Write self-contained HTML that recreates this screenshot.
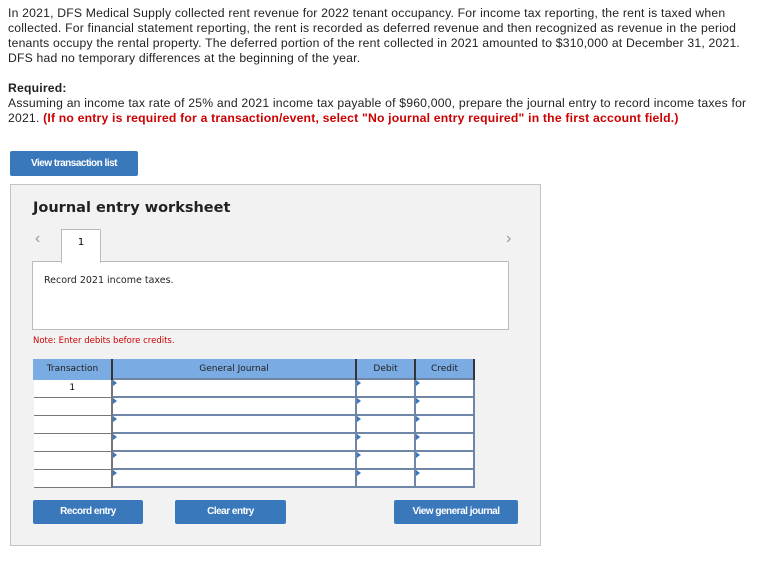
<!DOCTYPE html>
<html><head><style>
body{margin:0;background:#fff;width:781px;height:579px;position:relative;font-family:"Liberation Sans",Arial,sans-serif;overflow:hidden}
.p{position:absolute;left:8px;top:6px;width:770px;font-size:12.2px;line-height:15px;color:#222;white-space:nowrap;letter-spacing:0.2px}
.red{color:#c00;font-weight:bold}
.btn{position:absolute;background:#3a78bc;color:#fff;font-size:10px;font-weight:bold;text-align:center;border-radius:2px;letter-spacing:-0.5px}
.panel{position:absolute;left:10px;top:184px;width:529px;height:360px;background:#f2f2f2;border:1px solid #c4c4c4}
.v{font-family:"DejaVu Sans",Verdana,sans-serif}
table{border-collapse:collapse;position:absolute;left:33px;top:359px;font-family:"DejaVu Sans",Verdana,sans-serif;font-size:9px}
th{background:#7aabe3;color:#222;font-weight:normal;height:18px;border:1px solid #7aabe3;border-right:2px solid #333;padding:0}
td{height:16px;padding:0;background:#fff}
td.t{border-bottom:1px solid #777;text-align:center;border-right:2px solid #777}
td.i{border:2px solid #6f86a8;position:relative}
td.i:before{content:"";position:absolute;left:0;top:0;border-left:4px solid #3a78bc;border-top:3px solid transparent;border-bottom:3px solid transparent}
</style></head><body>
<div class="p">In 2021, DFS Medical Supply collected rent revenue for 2022 tenant occupancy. For income tax reporting, the rent is taxed when<br>collected. For financial statement reporting, the rent is recorded as deferred revenue and then recognized as revenue in the period<br>tenants occupy the rental property. The deferred portion of the rent collected in 2021 amounted to $310,000 at December 31, 2021.<br>DFS had no temporary differences at the beginning of the year.<br><br><b>Required:</b><br>Assuming an income tax rate of 25% and 2021 income tax payable of $960,000, prepare the journal entry to record income taxes for<br>2021. <span class="red">(If no entry is required for a transaction/event, select "No journal entry required" in the first account field.)</span></div>
<div class="btn" style="left:10px;top:151px;width:128px;height:25px;line-height:25px">View transaction list</div>
<div class="panel"></div>
<div class="v" style="position:absolute;left:33px;top:200px;font-size:14.5px;font-weight:bold;color:#222">Journal entry worksheet</div>
<div style="position:absolute;left:35px;top:230px;color:#999;font-size:16px">&lsaquo;</div>
<div style="position:absolute;left:506px;top:230px;color:#999;font-size:16px">&rsaquo;</div>
<div style="position:absolute;left:32px;top:261px;width:475px;height:67px;background:#fff;border:1px solid #bbb"></div>
<div class="v" style="position:absolute;left:61px;top:229px;width:38px;height:33px;background:#fff;border:1px solid #bbb;border-bottom:none;text-align:center;font-size:10px;line-height:26px">1</div>
<div class="v" style="position:absolute;left:44px;top:275px;font-size:9.5px;color:#222">Record 2021 income taxes.</div>
<div class="v" style="position:absolute;left:33px;top:336px;font-size:8.5px;color:#c00">Note: Enter debits before credits.</div>
<table>
<tr><th style="width:77px">Transaction</th><th style="width:242px">General Journal</th><th style="width:57px">Debit</th><th style="width:57px">Credit</th></tr>
<tr><td class="t">1</td><td class="i"></td><td class="i"></td><td class="i"></td></tr>
<tr><td class="t"></td><td class="i"></td><td class="i"></td><td class="i"></td></tr>
<tr><td class="t"></td><td class="i"></td><td class="i"></td><td class="i"></td></tr>
<tr><td class="t"></td><td class="i"></td><td class="i"></td><td class="i"></td></tr>
<tr><td class="t"></td><td class="i"></td><td class="i"></td><td class="i"></td></tr>
<tr><td class="t"></td><td class="i"></td><td class="i"></td><td class="i"></td></tr>
</table>
<div class="btn" style="left:33px;top:500px;width:110px;height:24px;line-height:24px">Record entry</div>
<div class="btn" style="left:175px;top:500px;width:111px;height:24px;line-height:24px">Clear entry</div>
<div class="btn" style="left:394px;top:500px;width:124px;height:24px;line-height:24px">View general journal</div>
</body></html>
